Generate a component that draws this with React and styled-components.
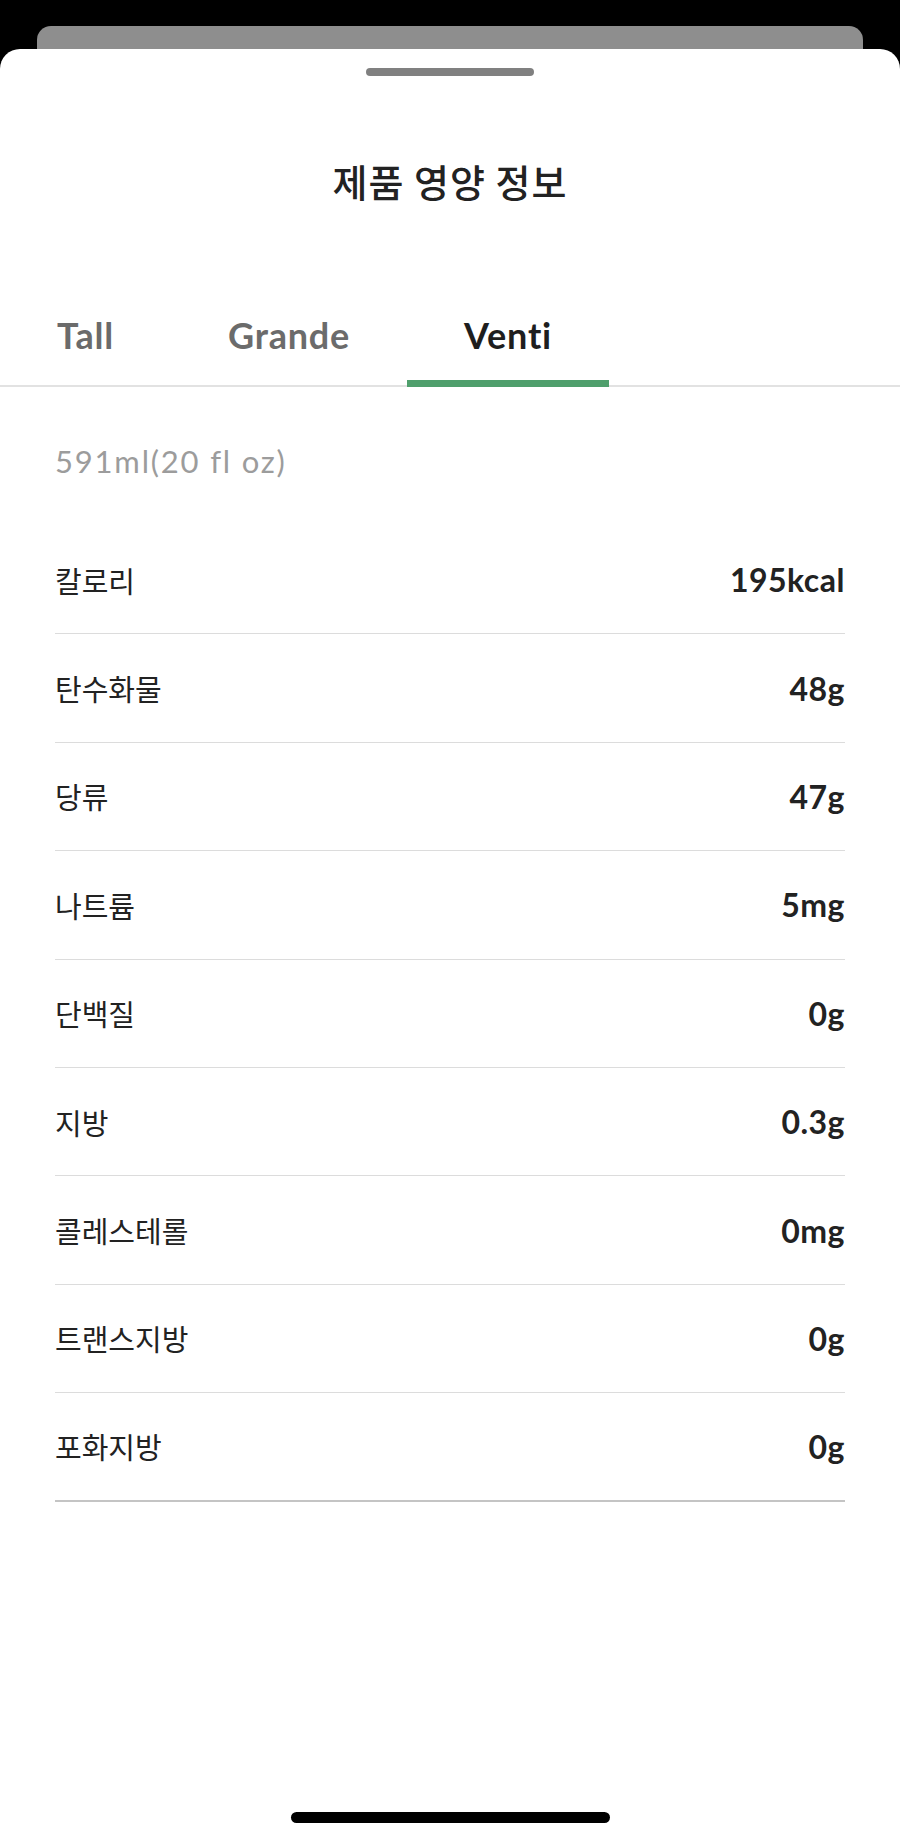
import React from 'react'
import styled, { createGlobalStyle } from 'styled-components'

const GlobalStyle = createGlobalStyle`
    * { box-sizing: border-box; }
    html, body {
        margin: 0;
        padding: 0;
        background: #000;
    }
    body {
        font-family: Lato, "Noto Sans CJK KR", sans-serif;
        font-variant-ligatures: none;
        -webkit-font-smoothing: antialiased;
    }
`

const Page = styled.div`
    width: 900px;
    height: 1842px;
    background: #000;
    padding-top: 26px;
    display: flex;
    flex-direction: column;
    overflow: hidden;
`

const BackCard = styled.div`
    height: 23px;
    margin: 0 37px;
    background: #8e8e8e;
    border-radius: 14px 14px 0 0;
    flex-shrink: 0;
`

const Sheet = styled.div`
    flex: 1;
    background: #fff;
    border-radius: 20px 20px 0 0;
    display: flex;
    flex-direction: column;
`

const Handle = styled.div`
    width: 168px;
    height: 8px;
    margin: 19px auto 0;
    border-radius: 4px;
    background: #808080;
`

const Title = styled.h1`
    margin: 82px 0 0;
    text-align: center;
    font-family: "Noto Sans CJK KR", sans-serif;
    font-size: 38px;
    font-weight: 500;
    line-height: 46px;
    letter-spacing: 1px;
    color: #222;
`

const Tabs = styled.div`
    display: flex;
    margin-top: 109px;
    border-bottom: 2px solid #e2e2e2;
`

const Tab = styled.div`
    position: relative;
    padding: 0 57px 28px;
    font-family: Lato, sans-serif;
    font-size: 36px;
    font-weight: 700;
    line-height: 44px;
    letter-spacing: 0.8px;
    color: ${p => (p.$active ? '#1e1e1e' : '#6b6b6b')};

    &::after {
        content: '';
        display: ${p => (p.$active ? 'block' : 'none')};
        position: absolute;
        left: 0;
        right: 0;
        bottom: -2px;
        height: 7px;
        background: #4f9f6c;
    }
`

const Content = styled.div`
    padding: 0 55px;
`

const Size = styled.div`
    margin-top: 54px;
    font-family: Lato, sans-serif;
    font-size: 31px;
    line-height: 40px;
    letter-spacing: 1.8px;
    color: #9c9c9c;
`

const List = styled.div`
    margin-top: 45px;
`

const Row = styled.div`
    height: 108.4px;
    display: flex;
    align-items: center;
    justify-content: space-between;
    border-bottom: 1px solid #dcdcdc;

    &:last-child {
        border-bottom: 2px solid #c4c4c4;
    }
`

const Label = styled.span`
    font-family: "Noto Sans CJK KR", sans-serif;
    font-size: 29px;
    color: #222;
`

const Value = styled.span`
    font-family: Lato, sans-serif;
    font-size: 32px;
    font-weight: 700;
    letter-spacing: 0.5px;
    color: #222;
`

const HomeBar = styled.div`
    width: 319px;
    height: 11px;
    margin: auto auto 19px;
    border-radius: 6px;
    background: #000;
`

const tabs = ['Tall', 'Grande', 'Venti']

const nutrition = [
    ['칼로리', '195kcal'],
    ['탄수화물', '48g'],
    ['당류', '47g'],
    ['나트륨', '5mg'],
    ['단백질', '0g'],
    ['지방', '0.3g'],
    ['콜레스테롤', '0mg'],
    ['트랜스지방', '0g'],
    ['포화지방', '0g'],
]

export default function App() {
    return (
        <Page>
            <GlobalStyle />
            <BackCard />
            <Sheet>
                <Handle />
                <Title>제품 영양 정보</Title>
                <Tabs>
                    {tabs.map(t => (
                        <Tab key={t} $active={t === 'Venti'}>{t}</Tab>
                    ))}
                </Tabs>
                <Content>
                    <Size>591ml(20 fl oz)</Size>
                    <List>
                        {nutrition.map(([name, amount]) => (
                            <Row key={name}>
                                <Label>{name}</Label>
                                <Value>{amount}</Value>
                            </Row>
                        ))}
                    </List>
                </Content>
                <HomeBar />
            </Sheet>
        </Page>
    )
}
